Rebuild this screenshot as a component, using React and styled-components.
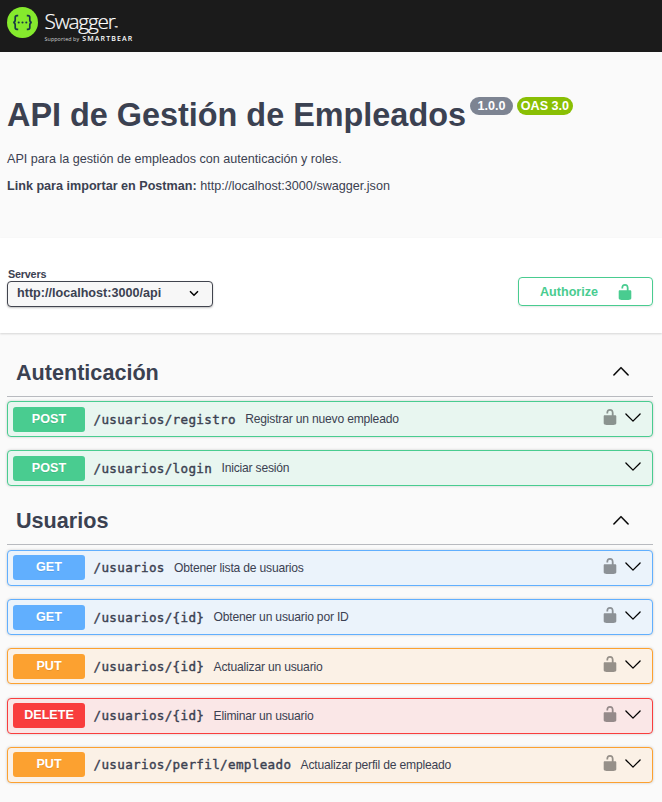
import React from "react";
import styled, { createGlobalStyle } from "styled-components";

const GlobalStyle = createGlobalStyle`
  *, *::before, *::after { box-sizing: border-box; }
  html, body { margin: 0; background: #fafafa; overflow: hidden; }
  body { font-family: "Liberation Sans", Arial, sans-serif; color: #3b4151; }
`;

const Page = styled.div`
  height: 802px;
  overflow: hidden;
`;

const Topbar = styled.header`
  height: 52px;
  background: #1b1b1b;
  padding: 7px;
  display: flex;
  gap: 6.5px;
`;

const Wordmark = styled.div`
  font-family: "Open Sans", "Noto Sans", sans-serif;
  color: #fff;
  padding-top: 2px;
`;

const Brand = styled.div`
  font-size: 20.8px;
  font-weight: 300;
  -webkit-text-stroke: 0.2px #fff;
  line-height: 25px;
  height: 25px;
  letter-spacing: -1.2px;
  white-space: nowrap;

  small {
    font-size: 4px;
    letter-spacing: 0;
  }
`;

const Support = styled.div`
  display: flex;
  align-items: baseline;
  gap: 3px;
  font-size: 5.4px;
  line-height: 10px;
  letter-spacing: 0.06px;
  white-space: nowrap;
  color: #d0d0d0;

  b {
    color: #fff;
    font-size: 7px;
    font-weight: 600;
    letter-spacing: 1.15px;
  }
`;

const Info = styled.section`
  height: 186px;
  padding: 45px 7px 0;
`;

const Title = styled.h1`
  margin: 0;
  display: flex;
  align-items: flex-start;
  font-size: 32.4px;
  line-height: 37px;
  font-weight: 700;
  white-space: nowrap;
`;

const Version = styled.span`
  height: 18px;
  width: ${(p) => p.$width}px;
  margin-left: ${(p) => p.$gap}px;
  border-radius: 9px;
  background: ${(p) => p.$color};
  color: #fff;
  font-size: 12.6px;
  line-height: 18px;
  text-align: center;
`;

const Text = styled.p`
  margin: ${(p) => p.$top}px 0 0;
  font-size: 12.6px;
  line-height: 15px;
`;

const Schemes = styled.section`
  height: 95px;
  background: #fff;
  box-shadow: 0 1px 2px rgba(0, 0, 0, 0.15);
  padding: 30px 9px 0 7px;
  display: flex;
  justify-content: space-between;
`;

const ServerLabel = styled.label`
  display: block;
  font-size: 10.8px;
  font-weight: 700;
  line-height: 12px;
  letter-spacing: -0.2px;
  padding-left: 1px;
`;

const ServerSelect = styled.div`
  width: 206px;
  height: 26px;
  margin-top: 1px;
  padding: 0 12px 2px 9px;
  display: flex;
  align-items: center;
  justify-content: space-between;
  border: 1px solid #41444e;
  border-radius: 4px;
  background: #f7f7f7;
  box-shadow: 0 1px 2px rgba(0, 0, 0, 0.25);
  font-size: 12.6px;
  font-weight: 700;
`;

const Authorize = styled.button`
  width: 135px;
  height: 29px;
  margin: 9px 0 0;
  padding: 0 18px 0 21px;
  display: flex;
  align-items: center;
  justify-content: space-between;
  border: 1px solid #49cc90;
  border-radius: 4px;
  background: transparent;
  box-shadow: 0 1px 2px rgba(0, 0, 0, 0.1);
  color: #49cc90;
  font: 700 12.6px "Liberation Sans", Arial, sans-serif;
`;

const Group = styled.section`
  padding: 0 9px 0 7px;
  margin-top: ${(p) => p.$top}px;
`;

const GroupHeader = styled.h3`
  margin: 0 0 ${(p) => p.$below}px;
  height: ${(p) => p.$height}px;
  padding: 0 23px 0 9px;
  display: flex;
  align-items: center;
  justify-content: space-between;
  border-bottom: 1px solid rgba(59, 65, 81, 0.35);
  font-size: 21.6px;
  font-weight: 700;

  svg {
    margin-top: -3px;
    color: #000;
    stroke: #000;
    stroke-width: 0.3;
  }
`;

const Operations = styled.div`
  display: grid;
  gap: 13.2px;
`;

const Operation = styled.div`
  height: 36px;
  padding: 0 10px 0 5px;
  display: flex;
  align-items: center;
  border: 1px solid ${(p) => p.$color};
  border-radius: 4px;
  background: ${(p) => p.$tint};
  box-shadow: 0 0 3px rgba(0, 0, 0, 0.19);
`;

const Method = styled.span`
  width: 72px;
  height: 25px;
  border-radius: 3px;
  background: ${(p) => p.$color};
  color: #fff;
  font-size: 12.6px;
  font-weight: 700;
  line-height: 24px;
  text-align: center;
  text-shadow: 0 1px 0 rgba(0, 0, 0, 0.1);
`;

const Path = styled.span`
  margin-left: 8.5px;
  font-family: "DejaVu Sans Mono", Consolas, monospace;
  font-size: 12.6px;
  letter-spacing: 0.33px;
  -webkit-text-stroke: 0.4px currentColor;
`;

const Summary = styled.span`
  margin-left: 9.3px;
  padding-top: 0.5px;
  flex: 1;
  font-size: 12.1px;
  letter-spacing: -0.19px;
  white-space: nowrap;
`;

const Icons = styled.div`
  height: 21px;
  align-self: flex-start;
  margin-top: 6px;
  display: flex;
  gap: 5px;
  color: #000;
`;

const Icon = styled.svg`
  display: block;
  flex: none;
  fill: currentColor;
  opacity: ${(p) => p.$opacity || 1};
`;

const Unlock = ({ opacity }) => (
  <Icon width="18" height="18" viewBox="0 0 20 20" $opacity={opacity}>
    <path d="M15.8 8H14V5.6C14 2.703 12.665 1 10 1 7.334 1 6 2.703 6 5.6V6h2v-.801C8 3.754 8.797 3 10 3c1.203 0 2 .754 2 2.199V8H4c-.553 0-1 .646-1 1.199V17c0 .549.428 1.139.951 1.307l1.197.387C5.672 18.861 6.55 19 7.1 19h5.8c.549 0 1.428-.139 1.951-.307l1.196-.387c.524-.167.953-.757.953-1.306V9.199C17 8.646 16.352 8 15.8 8z" />
  </Icon>
);

const ArrowDown = () => (
  <Icon width="18" height="18" viewBox="0 0 20 20">
    <path d="M17.418 6.109c.272-.275.709-.275.979 0s.271.718 0 .992l-7.908 7.988c-.27.275-.707.275-.978 0L1.603 7.101c-.271-.274-.271-.717-.001-.992s.708-.275.979 0L10 13.591z" />
  </Icon>
);

const ArrowUp = () => (
  <Icon width="18" height="18" viewBox="0 0 20 20">
    <path d="M17.418 14.908c.272.281.709.281.979 0s.271-.729 0-1.012L10.489 5.741c-.27-.281-.707-.281-.978 0L1.603 13.896c-.271.281-.271.73-.001 1.012s.708.281.979 0L10 7.27z" />
  </Icon>
);

const SelectArrow = () => (
  <Icon width="12" height="12" viewBox="0 0 12 12">
    <path d="M2 4.3l4 4 4-4" fill="none" stroke="#000" strokeWidth="1.5" />
  </Icon>
);

const Logo = () => (
  <Icon width="31" height="31" viewBox="0 0 31 31">
    <circle cx="15.5" cy="15.5" r="15.5" fill="#85ea2d" />
    <g fill="none" stroke="#173647" strokeWidth="1.7">
      <path d="M11.2 8.7H10c-1.3 0-1.8.6-1.8 1.8v2.6c0 1.6-.5 2.3-2 2.4 1.5.1 2 .8 2 2.4v2.6c0 1.2.5 1.8 1.8 1.8h1.2" />
      <path d="M19.8 8.7H21c1.3 0 1.8.6 1.8 1.8v2.6c0 1.6.5 2.3 2 2.4-1.5.1-2 .8-2 2.4v2.6c0 1.2-.5 1.8-1.8 1.8h-1.2" />
    </g>
    <g fill="#173647">
      <circle cx="11.7" cy="15.5" r="1.05" />
      <circle cx="15.5" cy="15.5" r="1.05" />
      <circle cx="19.3" cy="15.5" r="1.05" />
    </g>
  </Icon>
);

const methods = {
  POST: { color: "#49cc90", tint: "#e8f6f0" },
  GET: { color: "#61affe", tint: "#ebf3fb" },
  PUT: { color: "#fca130", tint: "#fbf1e6" },
  DELETE: { color: "#f93e3e", tint: "#fae7e7" },
};

const groups = [
  {
    name: "Autenticación",
    top: 16,
    height: 48,
    below: 4,
    items: [
      ["POST", "/usuarios/registro", "Registrar un nuevo empleado", true],
      ["POST", "/usuarios/login", "Iniciar sesión", false],
    ],
  },
  {
    name: "Usuarios",
    top: 12.8,
    height: 46,
    below: 5,
    items: [
      ["GET", "/usuarios", "Obtener lista de usuarios", true],
      ["GET", "/usuarios/{id}", "Obtener un usuario por ID", true],
      ["PUT", "/usuarios/{id}", "Actualizar un usuario", true],
      ["DELETE", "/usuarios/{id}", "Eliminar un usuario", true],
      ["PUT", "/usuarios/perfil/empleado", "Actualizar perfil de empleado", true],
    ],
  },
];

export default function App() {
  return (
    <Page>
      <GlobalStyle />
      <Topbar>
        <Logo />
        <Wordmark>
          <Brand>Swagger<small>™</small></Brand>
          <Support>Supported by <b>SMARTBEAR</b></Support>
        </Wordmark>
      </Topbar>
      <Info>
        <Title>
          API de Gestión de Empleados
          <Version $color="#7d8492" $width={43} $gap={4}>1.0.0</Version>
          <Version $color="#89bf04" $width={56} $gap={4}>OAS 3.0</Version>
        </Title>
        <Text $top={17.5}>API para la gestión de empleados con autenticación y roles.</Text>
        <Text $top={12}><b>Link para importar en Postman:</b> http://localhost:3000/swagger.json</Text>
      </Info>
      <Schemes>
        <div>
          <ServerLabel>Servers</ServerLabel>
          <ServerSelect>http://localhost:3000/api<SelectArrow /></ServerSelect>
        </div>
        <Authorize>Authorize<Unlock /></Authorize>
      </Schemes>
      {groups.map((g) => (
        <Group key={g.name} $top={g.top}>
          <GroupHeader $below={g.below} $height={g.height}>{g.name}<ArrowUp /></GroupHeader>
          <Operations>
            {g.items.map(([method, path, summary, secured]) => (
              <Operation key={method + path} $color={methods[method].color} $tint={methods[method].tint}>
                <Method $color={methods[method].color}>{method}</Method>
                <Path>{path}</Path>
                <Summary>{summary}</Summary>
                <Icons>
                  {secured && <Unlock opacity={0.4} />}
                  <ArrowDown />
                </Icons>
              </Operation>
            ))}
          </Operations>
        </Group>
      ))}
    </Page>
  );
}
